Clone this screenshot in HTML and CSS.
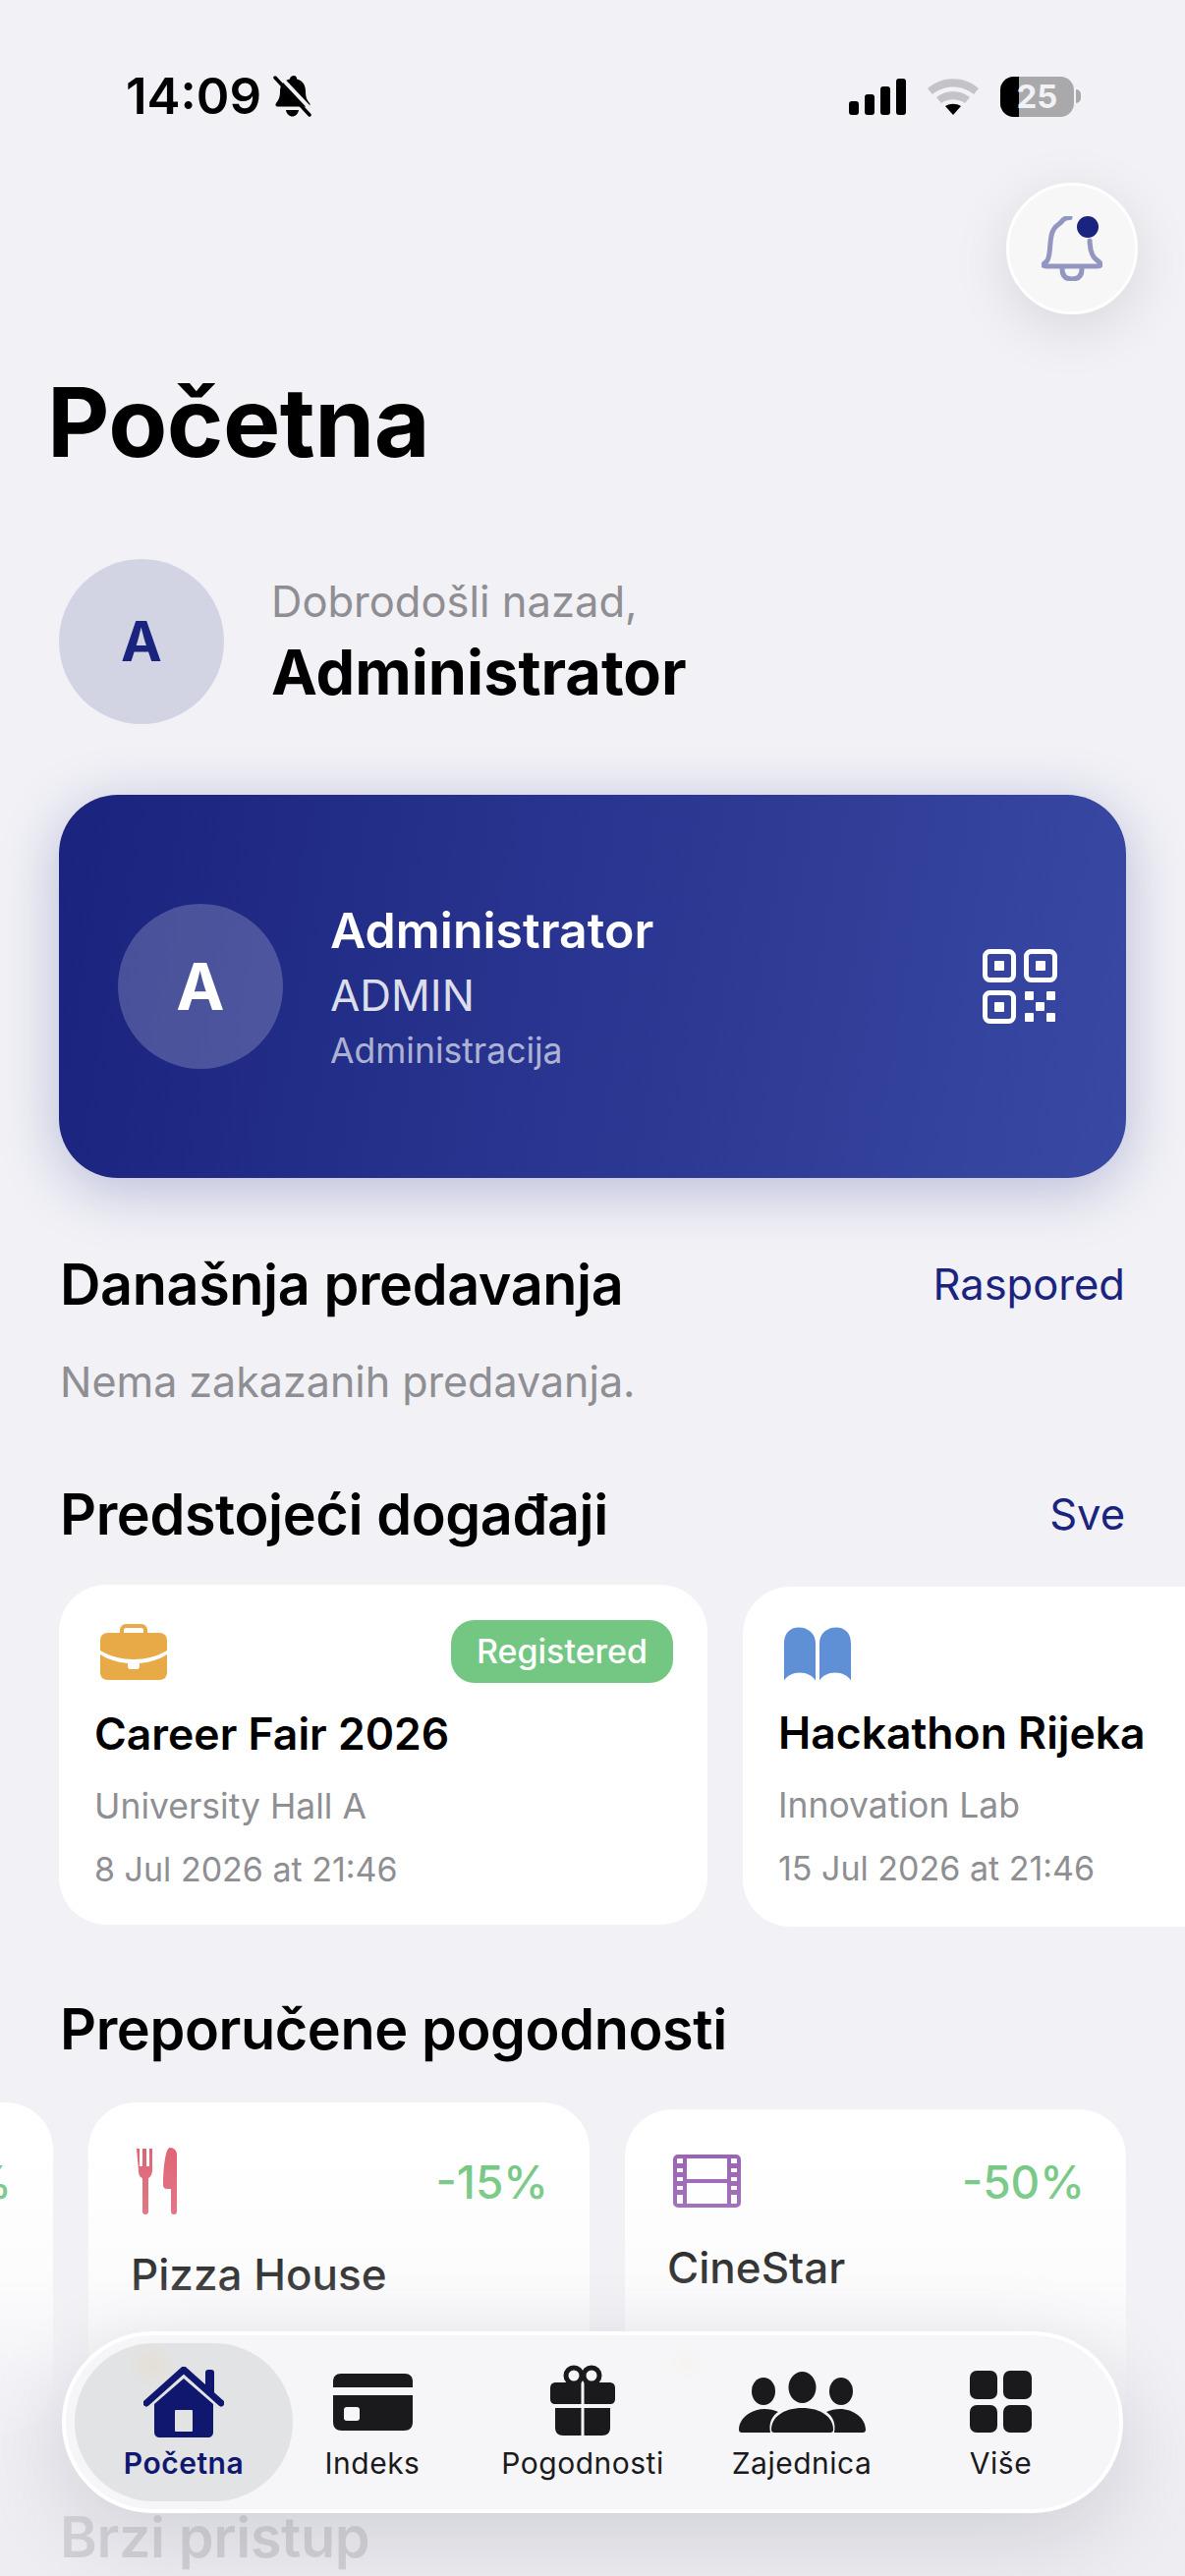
FILE: index.html
```html
<!DOCTYPE html>
<html lang="hr">
<head>
    <meta charset="UTF-8">
    <title>Početna</title>
    <link rel="stylesheet" href="styles.css">
</head>

<body>
<div class="status_bar">
    <div class="status_left">
        <span class="status_time">14:09</span>
        <svg class="status_mute" viewBox="0 0 39 42">
            <path d="M21 0c2 0 3 1.500 3.200 3.500 6 1.500 8.800 6.500 8.800 12.500 0 6 1.500 9 4 12 1.200 1.500.5 3.500-1.500 3.500H4.500C2.500 31.500 1.800 29.500 3 28c2.500-3 4-6 4-12 0-6 3-11 10-12.500C17 1.500 19 0 21 0z"/>
            <path d="M13 35h13c-.5 4-3.500 6.500-6.500 6.500S13.500 39 13 35z"/>
            <path class="mute_gap" d="M6 0l35 37"/>
            <path class="mute_line" d="M2 2l35 38"/>
        </svg>
    </div>
    <div class="status_right">
        <svg class="status_signal" viewBox="0 0 58 37">
            <rect x="0" y="23" width="10" height="14" rx="3"/>
            <rect x="16" y="16" width="10" height="21" rx="3"/>
            <rect x="32" y="8" width="10" height="29" rx="3"/>
            <rect x="48" y="0" width="10" height="37" rx="3"/>
        </svg>
        <svg class="status_wifi" viewBox="0 0 52 37">
            <path class="wifi_off" d="M0 10C15-3 37-3 52 10l-5 6C35 6 17 6 5 16z"/>
            <path class="wifi_off" d="M9 19c10-8 24-8 34 0l-5 6c-7-5-17-5-24 0z"/>
            <path d="M18 28c5-3 11-3 16 0l-8 9z"/>
        </svg>
        <div class="battery">
            <div class="battery_level"></div>
            <span class="battery_text">25</span>
        </div>
        <div class="battery_nub"></div>
    </div>
</div>

<div class="top_actions">
    <div class="bell_btn">
        <svg class="bell_icon" viewBox="0 0 62 66">
            <path d="M29 1.500C24 1.500 22 3 20 6 18 9 12 9 10 20 8 30 9 40 6 45 4 48 1 49 1.500 50 2 51 3 51 5 51H57C60 51 61 50 59 47 54 43 52 42 50 34 49.500 30 49 28 49 25"/>
            <path d="M21 54C21 62 26 64 31 64S41 62 41 54"/>
        </svg>
        <span class="bell_dot"></span>
    </div>
</div>

<h1 class="page_title">Početna</h1>

<div class="welcome">
    <div class="welcome_avatar">A</div>
    <div class="welcome_text">
        <p class="welcome_small">Dobrodošli nazad,</p>
        <p class="welcome_name">Administrator</p>
    </div>
</div>

<div class="id_card">
    <div class="id_avatar">A</div>
    <div class="id_info">
        <p class="id_name">Administrator</p>
        <p class="id_role">ADMIN</p>
        <p class="id_dept">Administracija</p>
    </div>
    <svg class="id_qr" viewBox="0 0 76 76">
        <rect x="2.500" y="2.500" width="29" height="29" rx="5"/>
        <rect x="44.500" y="2.500" width="29" height="29" rx="5"/>
        <rect x="2.500" y="44.500" width="29" height="29" rx="5"/>
        <rect class="qr_fill" x="12" y="12" width="10" height="10" rx="1"/>
        <rect class="qr_fill" x="54" y="12" width="10" height="10" rx="1"/>
        <rect class="qr_fill" x="12" y="54" width="10" height="10" rx="1"/>
        <rect class="qr_fill" x="43" y="43" width="9" height="9" rx="1"/>
        <rect class="qr_fill" x="65" y="43" width="9" height="9" rx="1"/>
        <rect class="qr_fill" x="54" y="54" width="9" height="9" rx="1"/>
        <rect class="qr_fill" x="43" y="65" width="9" height="9" rx="1"/>
        <rect class="qr_fill" x="65" y="65" width="9" height="9" rx="1"/>
    </svg>
</div>

<div class="section_head section_today">
    <h2>Današnja predavanja</h2>
    <a href="#">Raspored</a>
</div>
<p class="empty_text">Nema zakazanih predavanja.</p>

<div class="section_head section_events">
    <h2>Predstojeći događaji</h2>
    <a href="#">Sve</a>
</div>

<div class="event_row">
    <div class="event_card">
        <div class="event_top">
            <svg class="event_icon" viewBox="0 0 68 57">
                <path class="brief_handle" d="M22 11V6c0-2 2-4 4-4h16c2 0 4 2 4 4v5"/>
                <path class="brief_body" d="M8 9h52c5 0 8 3 8 8v10C58 33 46 36 34 36S10 33 0 27V17c0-5 3-8 8-8z"/>
                <path class="brief_body" d="M0 31c8 5 17 8 28 9v3c0 2 1 3 3 3h6c2 0 3-1 3-3v-3c11-1 20-4 28-9v18c0 5-3 8-8 8H8c-5 0-8-3-8-8z"/>
            </svg>
            <span class="event_badge">Registered</span>
        </div>
        <p class="event_title">Career Fair 2026</p>
        <p class="event_place">University Hall A</p>
        <p class="event_date">8 Jul 2026 at 21:46</p>
    </div>
    <div class="event_card event_card_next">
        <div class="event_top">
            <svg class="event_icon" viewBox="0 0 68 54">
                <path class="book_fill" d="M0 16C0 6 6 0 15 0s17 6 17 16v38c-3-5-9-8-16-8S3 49 0 54z"/>
                <path class="book_fill" d="M36 16C36 6 44 0 53 0s15 6 15 16v38c-3-5-9-8-16-8s-13 3-16 8z"/>
            </svg>
        </div>
        <p class="event_title">Hackathon Rijeka</p>
        <p class="event_place">Innovation Lab</p>
        <p class="event_date">15 Jul 2026 at 21:46</p>
    </div>
</div>

<div class="section_head section_perks">
    <h2>Preporučene pogodnosti</h2>
</div>

<div class="perk_row">
    <div class="perk_card">
        <div class="perk_top">
            <span></span>
            <span class="perk_off">-20%</span>
        </div>
    </div>
    <div class="perk_card">
        <div class="perk_top">
            <svg class="perk_fork" viewBox="0 0 41 68">
                <path d="M0 1h3v18h3V1h4v18h3V1h3v22c0 4-2 7-4 8v34c0 2-1 3-3 3s-3-1-3-3V31c-3-1-4-4-4-8z"/>
                <path d="M34 0c4 0 7 3 7 7v58c0 2-1 3-3 3s-3-1-3-3V42h-4c-3 0-4-2-4-4 0-14 2-38 7-38z"/>
            </svg>
            <span class="perk_off">-15%</span>
        </div>
        <p class="perk_title">Pizza House</p>
    </div>
    <div class="perk_card perk_card_low">
        <div class="perk_top">
            <svg class="perk_film" viewBox="0 0 69 54">
                <rect x="2" y="2" width="65" height="50" rx="3"/>
                <path d="M12 2v50M57 2v50M12 27h45"/>
                <path class="film_holes" d="M7 9v36M62 9v36"/>
            </svg>
            <span class="perk_off">-50%</span>
        </div>
        <p class="perk_title">CineStar</p>
    </div>
</div>

<div class="section_head section_quick">
    <h2>Brzi pristup</h2>
</div>

<div class="bottom_fade"></div>

<div class="tab_bar">
    <div class="tab tab_active">
        <svg class="tab_home" viewBox="0 0 82 72">
            <path class="home_fill" d="M41 12l30 26v28c0 4-2 6-6 6H17c-4 0-6-2-6-6V38z"/>
            <rect class="home_door" x="32" y="44" width="18" height="22" rx="1"/>
            <path class="home_fill" d="M63 6c0-2 1-3 3-3h3c2 0 3 1 3 3v24l-9-8z"/>
            <path class="home_roof" d="M3 37L41 3l38 34"/>
        </svg>
        <span>Početna</span>
    </div>
    <div class="tab">
        <svg class="tab_card" viewBox="0 0 81 58">
            <path d="M8 0h65c5 0 8 3 8 8v6H0V8c0-5 3-8 8-8z"/>
            <path d="M0 22h81v27c0 6-3 9-9 9H9c-6 0-9-3-9-9z"/>
            <rect class="tab_cut" x="11" y="34" width="16" height="14" rx="3"/>
        </svg>
        <span>Indeks</span>
    </div>
    <div class="tab tab_gift_wrap">
        <svg class="tab_gift" viewBox="0 0 66 72">
            <circle class="gift_loop" cx="24" cy="11" r="8"/>
            <circle class="gift_loop" cx="42" cy="11" r="8"/>
            <path d="M6 18h25.500v22H5c-3 0-5-2-5-5V24c0-4 2-6 6-6zM34.500 18H60c4 0 6 2 6 6v11c0 3-2 5-5 5H34.500z"/>
            <path d="M5 44h26.500v28H13c-5 0-8-3-8-8zM34.500 44H61v20c0 5-3 8-8 8H34.500z"/>
        </svg>
        <span>Pogodnosti</span>
    </div>
    <div class="tab">
        <svg class="tab_people" viewBox="0 0 129 62">
            <ellipse cx="64.500" cy="16" rx="14" ry="16"/>
            <ellipse cx="25" cy="20" rx="12" ry="14"/>
            <ellipse cx="104" cy="20" rx="12" ry="14"/>
            <path d="M36 62c-2 0-3-1-3-3 0-13 13-22 31.500-22S96 46 96 59c0 2-1 3-3 3z"/>
            <path d="M26 38c-13 0-26 9-26 21 0 2 1 3 3 3h29c-2-10 2-17 8-21-4-2-9-3-14-3z"/>
            <path d="M103 38c13 0 26 9 26 21 0 2-1 3-3 3H97c2-10-2-17-8-21 4-2 9-3 14-3z"/>
        </svg>
        <span>Zajednica</span>
    </div>
    <div class="tab">
        <svg class="tab_grid" viewBox="0 0 63 63">
            <rect x="0" y="0" width="28" height="29" rx="7"/>
            <rect x="34" y="0" width="29" height="29" rx="7"/>
            <rect x="0" y="35" width="28" height="28" rx="7"/>
            <rect x="34" y="35" width="29" height="28" rx="7"/>
        </svg>
        <span>Više</span>
    </div>
</div>
</body>
</html>
```

FILE: styles.css
```css
html,body{
    margin: 0;
    padding: 0;
}
body{
    position: relative;
    width: 1206px;
    height: 2622px;
    overflow: hidden;
    background: #F1F1F6;
    color: #000;
    font-family: Inter, "Noto Sans", sans-serif;
}
p,h1,h2{
    margin: 0;
    padding: 0;
}

/*status bar*/
.status_bar{
    display: flex;
    justify-content: space-between;
    align-items: center;
    height: 44px;
    padding: 76px 106px 0 128px;
}
.status_left{
    display: flex;
    align-items: center;
    gap: 12px;
}
.status_time{
    font-size: 51px;
    font-weight: 600;
    line-height: 44px;
}
.status_mute{
    width: 39px;
    height: 42px;
    fill: #000;
}
.mute_gap{
    stroke: #F1F1F6;
    stroke-width: 4;
}
.mute_line{
    stroke: #000;
    stroke-width: 3.500;
    stroke-linecap: round;
}
.status_right{
    display: flex;
    align-items: center;
}
.status_signal{
    width: 58px;
    height: 37px;
    fill: #000;
}
.status_wifi{
    width: 52px;
    height: 37px;
    margin-left: 22px;
    fill: #000;
}
.wifi_off{
    fill: #C4C4C8;
}
.battery{
    position: relative;
    width: 75px;
    height: 41px;
    margin-left: 22px;
    border-radius: 14px;
    background: #A9A9AB;
    overflow: hidden;
}
.battery_level{
    width: 19px;
    height: 100%;
    background: #000;
}
.battery_text{
    position: absolute;
    top: 0;
    left: 0;
    width: 75px;
    line-height: 41px;
    text-align: center;
    color: #F1F1F6;
    font-size: 33px;
    font-weight: 700;
}
.battery_nub{
    width: 5px;
    height: 14px;
    margin-left: 2px;
    border-radius: 0 7px 7px 0;
    background: #A9A9AB;
}

/*bell button*/
.top_actions{
    display: flex;
    justify-content: flex-end;
    margin-top: 66px;
    padding-right: 48px;
}
.bell_btn{
    position: relative;
    display: flex;
    justify-content: center;
    align-items: center;
    width: 134px;
    height: 134px;
    box-sizing: border-box;
    border: 3px solid #fff;
    border-radius: 50%;
    background: #F7F7F8;
    box-shadow: 0 14px 60px rgba(0, 0, 0, .11);
}
.bell_icon{
    width: 62px;
    height: 66px;
    fill: none;
    stroke: #9496C2;
    stroke-width: 5;
    stroke-linecap: round;
    stroke-linejoin: round;
}
.bell_dot{
    position: absolute;
    top: 31px;
    left: 69px;
    width: 22px;
    height: 22px;
    border-radius: 50%;
    background: #1A237E;
}

.page_title{
    margin-top: 50px;
    padding-left: 48px;
    font-size: 98px;
    font-weight: 700;
    line-height: 120px;
    letter-spacing: -.5px;
}

/*welcome row*/
.welcome{
    display: flex;
    align-items: center;
    gap: 48px;
    margin: 79px 60px 0;
}
.welcome_avatar{
    display: flex;
    justify-content: center;
    align-items: center;
    width: 168px;
    height: 168px;
    border-radius: 50%;
    background: #D2D4E4;
    color: #1A237E;
    font-size: 56px;
    font-weight: 700;
}
.welcome_small{
    color: #8E8E93;
    font-size: 43.500px;
    line-height: 56px;
}
.welcome_name{
    margin-top: 6px;
    font-size: 63px;
    font-weight: 700;
    line-height: 76px;
}

/*id card*/
.id_card{
    display: flex;
    align-items: center;
    height: 390px;
    margin: 72px 60px 0;
    padding: 0 70px 0 60px;
    box-sizing: border-box;
    border-radius: 60px;
    background: linear-gradient(100deg, #1A237E, #3949A3);
    box-shadow: 0 12px 60px rgba(26, 35, 126, .26);
    color: #fff;
}
.id_avatar{
    display: flex;
    justify-content: center;
    align-items: center;
    flex: none;
    width: 168px;
    height: 168px;
    border-radius: 50%;
    background: rgba(255, 255, 255, .2);
    font-size: 66px;
    font-weight: 700;
}
.id_info{
    flex: 1;
    margin-left: 48px;
}
.id_name{
    font-size: 50px;
    font-weight: 600;
    line-height: 64px;
}
.id_role{
    margin-top: 5px;
    font-size: 44px;
    line-height: 58px;
    color: rgba(255, 255, 255, .85);
}
.id_dept{
    margin-top: 5px;
    font-size: 35.500px;
    line-height: 46px;
    color: rgba(255, 255, 255, .65);
}
.id_qr{
    flex: none;
    width: 76px;
    height: 76px;
    fill: none;
    stroke: #fff;
    stroke-width: 5;
}
.qr_fill{
    fill: #fff;
    stroke: none;
}

/*section headers*/
.section_head{
    display: flex;
    justify-content: space-between;
    align-items: center;
    margin: 0 61px;
}
.section_head h2{
    font-size: 57.500px;
    font-weight: 600;
    line-height: 72px;
    letter-spacing: -.4px;
}
.section_head a{
    color: #1A237E;
    font-size: 43.500px;
    text-decoration: none;
}
.section_today{
    margin-top: 72px;
}
.empty_text{
    margin: 35px 61px 0;
    color: #8E8E93;
    font-size: 43px;
    line-height: 56px;
}
.section_events{
    margin-top: 71px;
}

/*event cards*/
.event_row{
    display: flex;
    align-items: flex-start;
    gap: 36px;
    margin-top: 36px;
    padding-left: 60px;
}
.event_card{
    flex: none;
    width: 660px;
    height: 346px;
    padding: 36px 36px 0;
    box-sizing: border-box;
    border-radius: 48px;
    background: #fff;
}
.event_card_next{
    margin-top: 2px;
}
.event_top{
    display: flex;
    justify-content: space-between;
    align-items: center;
    height: 64px;
}
.event_icon{
    width: 68px;
    height: 57px;
    margin-left: 6px;
}
.brief_handle{
    fill: none;
    stroke: #E8AA47;
    stroke-width: 4;
}
.brief_body{
    fill: #E8AA47;
}
.book_fill{
    fill: #5F90D6;
}
.event_badge{
    width: 226px;
    height: 64px;
    margin-right: -1px;
    border-radius: 24px;
    background: #74C782;
    color: #fff;
    font-size: 34px;
    font-weight: 500;
    line-height: 64px;
    text-align: center;
}
.event_title{
    margin-top: 24px;
    font-size: 44.500px;
    font-weight: 600;
    line-height: 56px;
}
.event_card_next .event_title{
    margin-top: 21px;
}
.event_place{
    margin-top: 24px;
    color: #8E8E93;
    font-size: 35.500px;
    line-height: 44px;
}
.event_date{
    margin-top: 20px;
    color: #8E8E93;
    font-size: 34px;
    line-height: 44px;
}

.section_perks{
    margin-top: 68px;
}

/*perk cards*/
.perk_row{
    display: flex;
    justify-content: flex-end;
    align-items: flex-start;
    gap: 36px;
    margin-top: 39px;
    padding-right: 60px;
}
.perk_card{
    flex: none;
    width: 510px;
    height: 335px;
    padding: 46px 42px 0 43px;
    box-sizing: border-box;
    border-radius: 48px;
    background: #fff;
}
.perk_card_low{
    margin-top: 7px;
}
.perk_top{
    display: flex;
    justify-content: space-between;
    align-items: flex-start;
    height: 68px;
}
.perk_fork{
    width: 41px;
    height: 68px;
    margin-left: 6px;
    fill: #E06677;
}
.perk_film{
    width: 69px;
    height: 54px;
    margin-left: 6px;
    fill: none;
    stroke: #9B63B5;
    stroke-width: 4;
}
.film_holes{
    stroke-width: 7;
    stroke-dasharray: 5 4;
}
.perk_off{
    margin-top: 7px;
    color: #74C782;
    font-size: 46px;
    font-weight: 500;
    line-height: 56px;
}
.perk_card_low .perk_off{
    margin-top: 0;
}
.perk_title{
    margin-top: 33px;
    font-size: 44px;
    font-weight: 500;
    line-height: 56px;
}
.perk_card_low .perk_title{
    margin-top: 19px;
}

.section_quick{
    margin-top: 64px;
}

/*fade under the tab bar*/
.bottom_fade{
    position: absolute;
    left: 0;
    right: 0;
    bottom: 0;
    height: 430px;
    background: linear-gradient(to bottom, rgba(241, 241, 246, 0) 0%, rgba(241, 241, 246, .25) 30%, rgba(240, 240, 245, .8) 55%, rgba(238, 238, 243, .92) 70%, rgba(236, 236, 241, .88) 100%);
}

/*tab bar*/
.tab_bar{
    position: absolute;
    left: 63px;
    top: 2373px;
    display: flex;
    align-items: stretch;
    width: 1080px;
    height: 185px;
    padding: 8px 8px 8px 9px;
    box-sizing: border-box;
    border: 4px solid #fff;
    border-radius: 92px;
    background: #F6F6F8;
    box-shadow: 0 24px 90px rgba(0, 0, 30, .13);
}
.tab{
    display: flex;
    flex-direction: column;
    justify-content: flex-end;
    align-items: center;
    flex: none;
    padding-bottom: 19px;
    color: #1A1A1C;
    fill: #1A1A1C;
    font-size: 30px;
    font-weight: 400;
    line-height: 40px;
    letter-spacing: .5px;
}
.tab:nth-child(1){
    width: 222px;
}
.tab:nth-child(2){
    width: 162px;
}
.tab:nth-child(3){
    width: 266px;
}
.tab:nth-child(4){
    width: 180px;
}
.tab:nth-child(5){
    width: 225px;
}
.tab_active{
    border-radius: 81px;
    background: radial-gradient(circle at 78px 22px, rgba(245, 205, 130, .16), rgba(245, 205, 130, 0) 24px), #E2E3E5;
    color: #10176E;
    font-weight: 600;
}
.tab_gift_wrap{
    background: radial-gradient(circle at 238px 20px, rgba(245, 215, 140, .07), rgba(245, 215, 140, 0) 20px);
}
.tab_home{
    width: 82px;
    height: 72px;
    margin-bottom: 6px;
}
.home_fill{
    fill: #10176E;
}
.home_door{
    fill: #E2E3E5;
}
.home_roof{
    fill: none;
    stroke: #10176E;
    stroke-width: 7;
    stroke-linecap: round;
    stroke-linejoin: round;
}
.tab_card{
    width: 81px;
    height: 58px;
    margin-bottom: 13px;
}
.tab_cut{
    fill: #F6F6F8;
}
.tab_gift{
    width: 66px;
    height: 72px;
    margin-bottom: 8px;
}
.gift_loop{
    fill: none;
    stroke: #1A1A1C;
    stroke-width: 5;
}
.tab_people{
    width: 129px;
    height: 62px;
    margin-bottom: 11px;
}
.tab_grid{
    width: 63px;
    height: 63px;
    margin-bottom: 11px;
}
```
